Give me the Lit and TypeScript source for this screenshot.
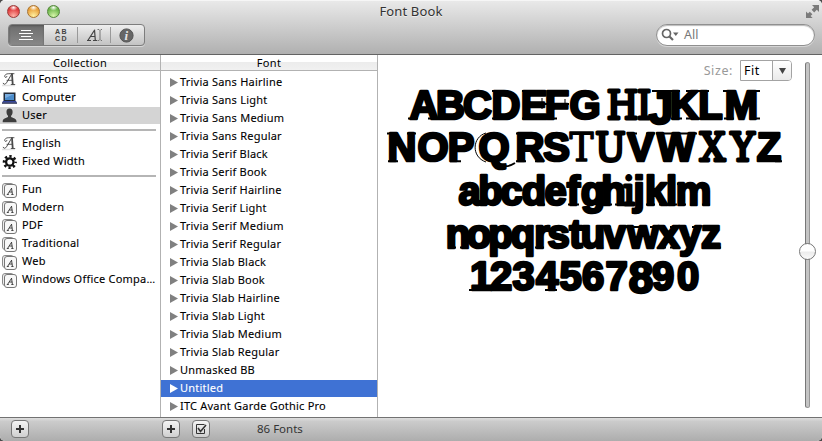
import { LitElement, html, css, svg } from "lit";
import { customElement } from "lit/decorators.js";
import { classMap } from "lit/directives/class-map.js";

type Glyph = [char: string, centre: number, style?: "serif" | "tall" | "thin", dy?: number];
interface SpecimenLine { baseline: number; top: number; glyphs: Glyph[]; feet: number[][]; caps: number[][]; }

const SPECIMEN: SpecimenLine[] = [
  { baseline: 118.6, top: 91, glyphs: [["A", 424], ["B", 450.5], ["C", 477.5], ["D", 506], ["E", 534], ["F", 557], ["G", 585], ["H", 622.5, "serif"], ["I", 644, "serif"], ["J", 661, "tall", 5], ["K", 684.5], ["L", 710.5], ["M", 741.5]],
    feet: [[408, 418], [428, 439], [439, 445], [492, 500], [522, 530], [547, 557], [671, 682], [686, 697], [698, 708], [724, 734], [751, 760]],
    caps: [[439, 445], [492, 500], [522, 530], [547, 555], [652, 671], [671, 680], [686, 696], [698, 709], [723, 733], [751, 760]] },
  { baseline: 161.2, top: 133.5, glyphs: [["N", 402], ["O", 433], ["P", 461], ["Q", 494], ["R", 530], ["S", 556.5], ["T", 581.5, "thin"], ["U", 610.5, "serif"], ["V", 640.5], ["W", 676], ["X", 712.5, "serif"], ["Y", 742.5, "serif"], ["Z", 769]],
    feet: [[388, 398], [450, 461], [516, 526], [535, 544], [775, 782]],
    caps: [[387, 396], [407, 416], [449, 457], [516, 524], [627, 637], [646, 655], [656, 697]] },
  { baseline: 204.6, top: 184, glyphs: [["a", 469.5], ["b", 490.5], ["c", 511.5], ["d", 534], ["e", 555.5], ["f", 573.5], ["g", 593], ["h", 613.5], ["i", 629, "serif"], ["j", 639], ["k", 656], ["l", 671.5], ["m", 693.5]],
    feet: [[476, 480], [540, 545], [568, 579], [604, 612], [615, 623], [646, 655], [659, 667], [667, 677], [679, 686], [690, 697], [702, 710]],
    caps: [[603, 608], [677, 682]] },
  { baseline: 247.6, top: 227, glyphs: [["n", 458], ["o", 479], ["p", 500.5], ["q", 523], ["r", 542], ["s", 558.5], ["t", 576], ["u", 593], ["v", 614.5], ["w", 643], ["x", 668.5], ["y", 690], ["z", 711]],
    feet: [[448, 456], [460, 468], [535, 544], [598, 603], [658, 666], [670, 679], [717, 721]],
    caps: [[448, 453], [490, 495], [583, 587], [603, 611], [619, 628], [632, 640], [650, 660], [670, 678], [679, 686], [692, 701]] },
  { baseline: 290, top: 262, glyphs: [["1", 481], ["2", 501], ["3", 523.5], ["4", 547], ["5", 570.5], ["6", 593], ["7", 616.5], ["8", 641, "tall", 3], ["9", 663], ["0", 688]],
    feet: [[469, 494], [545, 557]],
    caps: [] },
];

const FONTS = [
  "Trivia Sans Hairline", "Trivia Sans Light", "Trivia Sans Medium", "Trivia Sans Regular",
  "Trivia Serif Black", "Trivia Serif Book", "Trivia Serif Hairline", "Trivia Serif Light",
  "Trivia Serif Medium", "Trivia Serif Regular", "Trivia Slab Black", "Trivia Slab Book",
  "Trivia Slab Hairline", "Trivia Slab Light", "Trivia Slab Medium", "Trivia Slab Regular",
  "Unmasked BB", "Untitled", "ITC Avant Garde Gothic Pro",
];

type IconName = "script" | "computer" | "user" | "gear" | "set";
const COLLECTIONS: { name: string; icon: IconName }[][] = [
  [{ name: "All Fonts", icon: "script" }, { name: "Computer", icon: "computer" }, { name: "User", icon: "user" }],
  [{ name: "English", icon: "script" }, { name: "Fixed Width", icon: "gear" }],
  ["Fun", "Modern", "PDF", "Traditional", "Web", "Windows Office Compa…"].map((name) => ({ name, icon: "set" as IconName })),
];

const ICONS = {
  script: svg`<path d="M2 14.500h13" stroke="#e2e2e2" stroke-width="1.500"/><g fill="none" stroke="#4a4a4a" stroke-linecap="round">
    <path d="M3.200 12.300c.4 1.500 2.200 1.300 3.300-.5L11.600 3.200"/>
    <path d="M12 3 12.700 13" stroke-width="1.800"/>
    <path d="M7 9.300h5.200M11.200 13.500h3.600M14 2.700H8.800C6 2.500 4.200 4.300 4.800 5.900c.5 1 2 .8 2.100-.4" stroke-width=".9"/></g>`,
  computer: svg`<path d="M3.500 3.500h12V12h-12z" fill="#222b38"/><path d="M5 5h9v6H5z" fill="#4b8ccb"/>
    <path d="M5 5h9L5 9.300z" fill="#79ade0"/><path d="M3 12h13l1 1.700H2z" fill="#34459b"/><path d="M2 13.500h15v1.300H2z" fill="#20264a"/>`,
  user: svg`<path d="M9.500 1.500c2.300 0 3.300 1.600 3.100 3.800-.1 1.700-.8 2.800-1.500 3.500v1.300c1.200.9 5 1.200 5.400 3.900v1.300H2.700V14c.4-2.700 4.200-3 5.300-3.900V8.800c-.7-.7-1.400-1.800-1.500-3.500-.2-2.200.8-3.800 3-3.800z" fill="#3d3d3d"/>`,
  gear: svg`<circle cx="9.800" cy="9" r="3.700" fill="none" stroke="#111" stroke-width="2.300"/>
    <circle cx="9.800" cy="9" r="5.800" fill="none" stroke="#111" stroke-width="2.500" stroke-dasharray="2.300 2.255" stroke-dashoffset="1.150"/>`,
  set: svg`<rect x="2.500" y="2.500" width="11" height="12" rx="2.500" fill="#eee" stroke="#8a8a8a"/>
    <rect x="4.500" y="3.500" width="12" height="13" rx="2.500" fill="#f8f8f8" stroke="#777"/>
    <path d="M6.800 13.500h2M7.700 13.200l3.900-6M11.500 7l.9 6.200M9.200 11h3M11.300 13.500h2.200" fill="none" stroke="#333" stroke-width=".9"/>`,
};

@customElement("app-root")
export class AppRoot extends LitElement {
  static styles = css`
    :host { display: block; width: 822px; height: 441px; font: 11px/18px "Noto Sans", "Open Sans", sans-serif; color: #000; background: #4a4a4a; }
    * { box-sizing: border-box; }
    svg { display: block; flex: none; }
    .window { height: 441px; display: grid; grid-template-rows: 55px 362px 24px; border-radius: 5px; overflow: hidden; background: #fff; }
    .titlebar { border-bottom: 1px solid #636363; background: linear-gradient(#e9e9e9, #d2d2d2 40%, #b0b0b0); display: grid; grid-template-rows: 20px 33px; border-top: 1px solid #f6f6f6; }
    .caption { display: grid; grid-template-columns: 60px 1fr 60px; align-items: center; }
    .lights { display: flex; gap: 7px; padding-left: 7px; }
    .light { width: 13px; height: 13px; border-radius: 50%; border: 1px solid; }
    .red { border-color: #9a3c3a; background: radial-gradient(ellipse 4px 3px at 50% 15%, #fff, transparent), radial-gradient(circle at 50% 90%, #ffb3a8, #df3b3c 65%); }
    .amber { border-color: #a87230; background: radial-gradient(ellipse 4px 3px at 50% 15%, #fff, transparent), radial-gradient(circle at 50% 90%, #fff2a2, #e9a13c 65%); }
    .green { border-color: #53853b; background: radial-gradient(ellipse 4px 3px at 50% 15%, #fff, transparent), radial-gradient(circle at 50% 90%, #d9f7ac, #6eb64c 65%); }
    .title { text-align: center; font-size: 13px; color: #333; letter-spacing: .15px; text-shadow: 0 1px #eee; }
    .expand { justify-self: end; margin-right: 2px; }
    .tools { display: flex; justify-content: space-between; padding: 3px 7px 0 8px; align-items: flex-start; }
    .segments { display: flex; width: 137px; height: 22px; border: 1px solid #7d7d7d; border-radius: 4px; background: linear-gradient(#eee, #c3c3c3); box-shadow: 0 1px #d8d8d8; overflow: hidden; }
    .segment { flex: 0 0 33px; display: grid; place-items: center; background: linear-gradient(#999, #999) 0 50% / 1px 16px no-repeat; }
    .segment.on { flex-basis: 35px; background: linear-gradient(#6d6d6d, #888); box-shadow: inset 0 1px 2px #555; }
    .segment.on + .segment { background: none; }
    .search { width: 159px; height: 22px; border: 1px solid #8f8f8f; border-radius: 11px; background: #fff; box-shadow: inset 0 1px 1px #bbb, 0 1px #d5d5d5; display: flex; align-items: center; padding-left: 3px; color: #777; font-size: 12.500px; gap: 5px; }
    .panes { display: grid; grid-template-columns: 161px 217px 1fr; }
    .column { border-right: 1px solid #b2b2b2; }
    .head { height: 16px; line-height: 15px; text-align: center; border-bottom: 1px solid #b2b2b2; background: linear-gradient(#fff 50%, #ececec 50%, #f1f1f1); letter-spacing: .3px; }
    .row { height: 18px; display: flex; align-items: flex-start; line-height: 16px; letter-spacing: .22px; white-space: nowrap; -webkit-text-stroke: .1px; }
    .row.on { border-bottom: 1px solid #fff; background: #d4d4d4; }
    .row svg { margin-right: 4px; }
    .row .text { height: 16px; }
    .rule { height: 2px; background: #b5b5b5; margin: 4px 4px 4px 2px; }
    .fonts { padding-top: 3px; }
    .font { padding-left: 9px; }
    .font svg { margin: 3px 2px 0 0; fill: #808080; }
    .font.on { background: #3f72d4; color: #fff; }
    .font.on svg { fill: #fff; }
    .preview { position: relative; }
    .specimen { position: absolute; left: 0; top: 0; }
    .glyphs { font: bold 40px "Liberation Sans", sans-serif; text-anchor: middle; stroke: #000; stroke-width: 2.600px; stroke-linejoin: round; }
    .serif, .thin { font: 40px "DejaVu Serif Condensed", "DejaVu Serif", serif; font-stretch: condensed; stroke-width: 3px; }
    .thin { stroke-width: 1.400px; }
    .tall { font-size: 44px; }
    .marks { fill: none; stroke: #000; stroke-width: 2px; }
    .hair { fill: none; stroke: #000; stroke-width: 1px; }
    .controls { display: flex; justify-content: flex-end; align-items: center; padding: 5px 30px 0 0; gap: 7px; font-size: 12.500px; color: #999; }
    .size { letter-spacing: .6px; }
    .select { width: 52px; height: 21px; border: 1px solid #a3a3a3; border-radius: 0 4px 4px 0; display: grid; grid-template-columns: 32px 1fr; color: #000; line-height: 19px; }
    .value { padding-left: 3px; border-right: 1px solid #a3a3a3; letter-spacing: .5px; }
    .arrow { display: grid; place-items: center; background: linear-gradient(#fff, #eaeaea); border-radius: 0 3px 3px 0; }
    .track { position: absolute; left: 427px; top: 7px; width: 5px; height: 346px; border-radius: 3px; border: 1px solid #979797; border-left-color: #777; background: #c4c4c4; }
    .thumb { position: absolute; left: 421px; top: 188px; width: 17px; height: 17px; border-radius: 50%; border: 1px solid #777; background: linear-gradient(#fff 45%, #ececec 55%, #fafafa); }
    .status { border-top: 1px solid #727272; background: linear-gradient(#dedede, #cbcbcb 15%, #adadad); display: grid; grid-template-columns: 151px 30px 65px auto; padding: 1px 0 0 11px; color: #333; font-size: 11.500px; line-height: 20px; }
    .button { width: 18px; height: 18px; margin-top: 1px; border: 1px solid #777; border-radius: 4px; background: linear-gradient(#f4f4f4, #cfcfcf); display: grid; place-items: center; }
  `;

  private marks(spans: number[][], y: number) {
    return spans.map(([from, to]) => `M${from} ${y}H${to}`).join("");
  }

  private line({ baseline, top, glyphs, feet, caps }: SpecimenLine) {
    return svg`<text class="glyphs">${glyphs.map(([char, x, style, dy = 0]) =>
        svg`<tspan class=${style ?? "plain"} x=${x} y=${baseline + dy}>${char}</tspan>`)}</text>
      <path class="marks" d=${this.marks(feet, baseline) + this.marks(caps, top)} />`;
  }

  private plus() {
    return html`<div class="button"><svg width="10" height="10"><path d="M5 1v8M1 5h8" stroke="#333" stroke-width="2"/></svg></div>`;
  }

  render() {
    return html`<div class="window">
      <header class="titlebar">
        <div class="caption">
          <div class="lights"><i class="light red"></i><i class="light amber"></i><i class="light green"></i></div>
          <div class="title">Font Book</div>
          <svg class="expand" width="15" height="15" viewBox="0 0 15 15"><path d="M7 1h7v7l-2.200-2.200-2.600 2.600L6.600 5.800l2.600-2.600zM1 7.500l2 2 1.800-1.800 2.600 2.600L5.600 12l2 2H1z" fill="#7a7a7a"/></svg>
        </div>
        <div class="tools">
          <div class="segments">
            <div class="segment on"><svg width="16" height="12"><path d="M2 1.500h10M0 4.500h14M2 7.500h10M0 10.500h14" stroke="#fff" stroke-width="1.100"/></svg></div>
            <div class="segment"><svg width="16" height="14" font-family="Liberation Sans" font-size="7" font-weight="bold" fill="#444"><text x="2" y="6">A</text><text x="8.500" y="6">B</text><text x="2" y="13">C</text><text x="8.500" y="13">D</text></svg></div>
            <div class="segment"><svg width="18" height="14"><path d="M2 12.500h4M3 12.300 9.600 2M9.500 1.600l.8 10.800M5.400 8.500h4.500M8 12.500h4" fill="none" stroke="#444" stroke-width="1.200"/><path d="M12.500 1.500h1.500l1 1 1-1h1M12.500 12.500h1.500l1-1 1 1h1M15 2.500v9" fill="none" stroke="#777"/></svg></div>
            <div class="segment"><svg width="15" height="15"><circle cx="7.500" cy="7.500" r="6.600" fill="#666" stroke="#555"/><text x="7.300" y="12" text-anchor="middle" font-family="Liberation Serif" font-size="13" font-weight="bold" font-style="italic" fill="#e5e5e5">i</text></svg></div>
          </div>
          <div class="search"><svg width="19" height="16"><circle cx="6.500" cy="6.500" r="4" fill="none" stroke="#666" stroke-width="1.700"/><path d="m9.500 9.500 3.500 3.500" stroke="#666" stroke-width="2.200"/><path d="M13 5.500h5.500l-2.700 3.500z" fill="#666"/></svg>All</div>
        </div>
      </header>
      <main class="panes">
        <section class="column">
          <div class="head">Collection</div>
          ${COLLECTIONS.map((group, i) => html`${i ? html`<div class="rule"></div>` : ""}
            ${group.map((c) => html`<div class=${classMap({ row: true, on: c.name === "User" })}>
              <svg width="18" height="17">${ICONS[c.icon]}</svg><span class="text">${c.name}</span></div>`)}`)}
        </section>
        <section class="column">
          <div class="head">Font</div>
          <div class="fonts">${FONTS.map((name) => html`<div class=${classMap({ row: true, font: true, on: name === "Untitled" })}>
            <svg width="8" height="11"><path d="M0 1l8 4.500L0 10z"/></svg><span class="text">${name}</span></div>`)}</div>
        </section>
        <section class="preview">
          <svg class="specimen" width="444" height="361" viewBox="378 55 444 361">
            ${SPECIMEN.map((line) => this.line(line))}
            <path class="hair" d="M486 133c-14 4-15 24 0 29M542 98v11M565 99v7"/>
            <path class="marks" d="M496 158c4 10 11 10 19 5M540 104h9M560 104h9"/>
          </svg>
          <div class="controls"><span class="size">Size:</span><div class="select"><span class="value">Fit</span><span class="arrow"><svg width="7" height="6"><path d="M0 0h7L3.500 6z" fill="#444"/></svg></span></div></div>
          <div class="track"></div><div class="thumb"></div>
        </section>
      </main>
      <footer class="status">
        ${this.plus()}${this.plus()}
        <div class="button"><svg width="12" height="12"><path d="M9.500 6v4.500h-8v-9h8" fill="none" stroke="#333"/><path d="m3 5 2.500 3.500L11 2" fill="none" stroke="#333" stroke-width="1.600"/></svg></div>
        <span>86 Fonts</span>
      </footer>
    </div>`;
  }
}
